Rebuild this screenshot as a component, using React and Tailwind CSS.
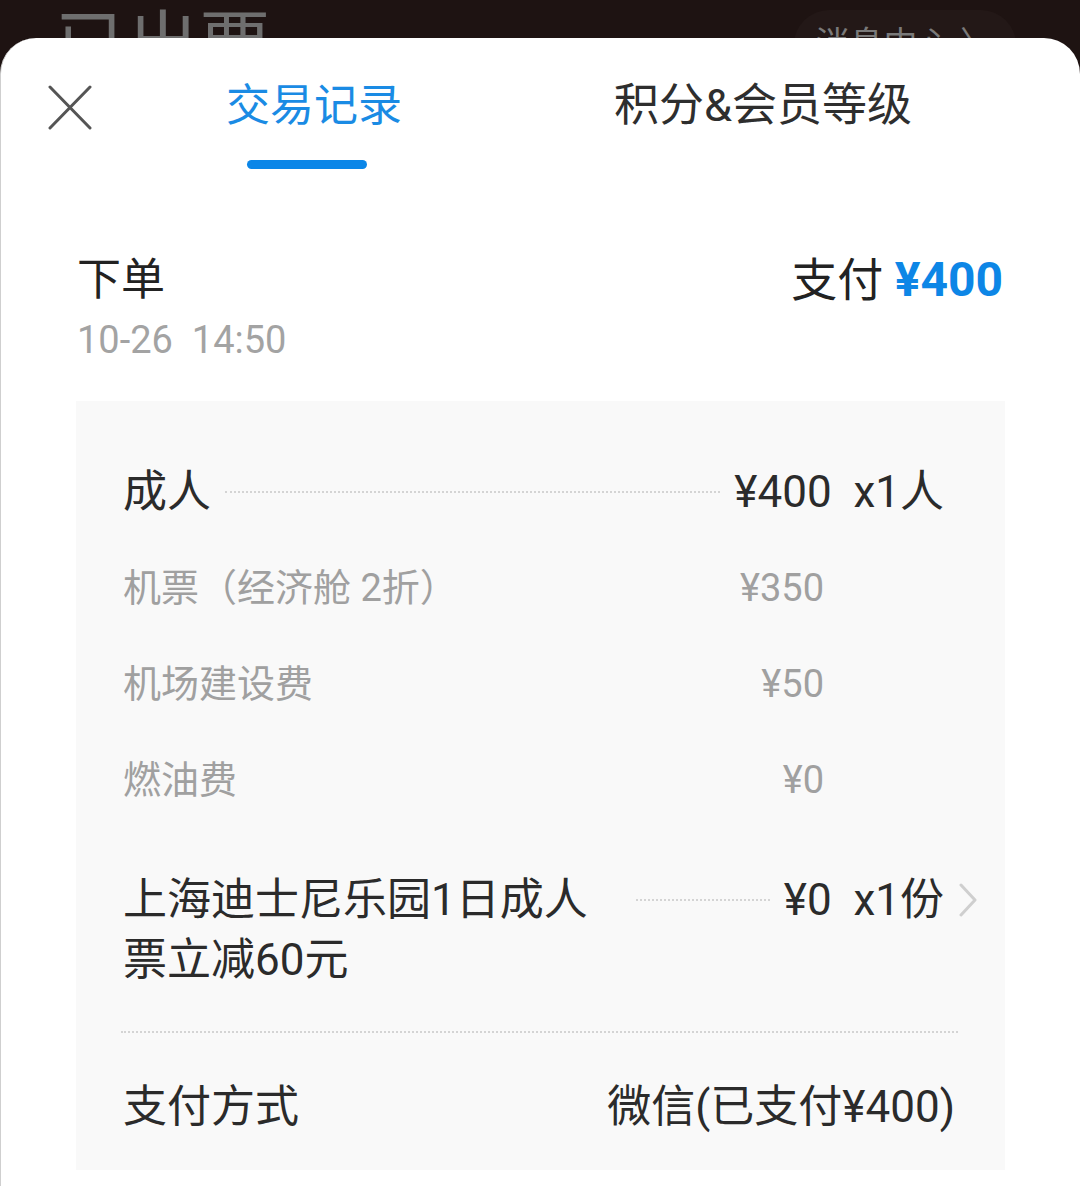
import React from "react";

// fee breakdown under the adult ticket
const SUB_ITEMS = [
  { label: "机票（经济舱 2折）", price: "¥350" },
  { label: "机场建设费", price: "¥50" },
  { label: "燃油费", price: "¥0" },
];

const FONT = { fontFamily: '"Roboto", "Noto Sans CJK SC", sans-serif' };

const CloseIcon = () => (
  <svg width="44" height="45" viewBox="0 0 44 45" fill="none">
    <path d="M2 2 L42 43 M42 2 L2 43" stroke="#555" strokeWidth="3" strokeLinecap="round" />
  </svg>
);

const Chevron = () => (
  <svg width="20" height="34" viewBox="0 0 20 34" fill="none">
    <path d="M3 2 L17 17 L3 32" stroke="#cfcfcf" strokeWidth="3" strokeLinecap="round" strokeLinejoin="round" />
  </svg>
);

const Dots = ({ className = "" }) => (
  <div className={`border-t-2 border-dotted border-[#d4d4d4] ${className}`}></div>
);

export default function App() {
  return (
    <div className="w-[1080px] h-[1186px] bg-[#1e1312] overflow-hidden flex flex-col" style={FONT}>
      {/* page behind the sheet */}
      <div className="h-[38px] shrink-0 overflow-hidden flex justify-between pl-[55px] pr-[64px]">
        <span className="text-[72px] leading-[72px] mt-[10px] text-[#6e6e6e]">已出票</span>
        <div className="mt-[10px] h-[70px] px-[22px] rounded-full bg-[#231817] flex items-start pt-[14px]">
          <span className="text-[34px] leading-[40px] text-[#7a7a7a]">消息中心 〉</span>
        </div>
      </div>

      {/* bottom sheet */}
      <div className="flex-1 bg-white rounded-t-[36px] border-l border-[#cfcfcf]">
        <div className="flex items-start pt-[38px] pl-[47px]">
          <div className="mt-[9px]">
            <CloseIcon />
          </div>
          <div className="ml-[134px] flex flex-col items-center">
            <span className="text-[44px] leading-[60px] text-[#1a8be4]">交易记录</span>
            <div className="mt-[24px] mr-[14px] w-[120px] h-[9px] rounded-full bg-[#0b86e8]"></div>
          </div>
          <span className="ml-[212px] text-[45px] leading-[60px] text-[#2e2e2e]">积分&amp;会员等级</span>
        </div>

        <div className="mt-[83px] pl-[76px] pr-[77px] flex justify-between items-start">
          <div>
            <div className="text-[44px] leading-[56px] text-[#222]">下单</div>
            <div className="mt-[10px] text-[38px] leading-[44px] text-[#a3a3a3] whitespace-pre">10-26  14:50</div>
          </div>
          <div className="text-[46px] leading-[56px] text-[#222]">
            支付 <span className="font-bold text-[48px] text-[#0d86e6]">¥400</span>
          </div>
        </div>

        <div className="mt-[39px] mx-[75px] bg-[#f9f9f9] pl-[47px] pr-[61px] pt-[43px] pb-[15px]">
          <div className="h-[96px] flex items-center text-[44px] text-[#2b2b2b]">
            <span>成人</span>
            <Dots className="flex-1 mx-[14px]" />
            <span className="whitespace-pre">¥400  x1人</span>
          </div>

          {SUB_ITEMS.map((item) => (
            <div key={item.label} className="h-[96px] flex items-center justify-between pr-[120px] text-[38px] text-[#a0a0a0]">
              <span>{item.label}</span>
              <span>{item.price}</span>
            </div>
          ))}

          <div className="mt-[42px] flex items-start text-[44px] leading-[60px] text-[#2b2b2b] mr-[-34px]">
            <span className="w-[499px] shrink-0">上海迪士尼乐园1日成人票立减60元</span>
            <Dots className="flex-1 mx-[14px] mt-[29px]" />
            <span className="whitespace-pre">¥0  x1份</span>
            <div className="ml-[14px] mt-[13px]">
              <Chevron />
            </div>
          </div>

          <Dots className="mt-[41px] ml-[-2px] mr-[-14px]" />

          <div className="mt-[26px] h-[96px] flex items-center justify-between mr-[-11px] text-[44px] text-[#2b2b2b]">
            <span>支付方式</span>
            <span>微信(已支付¥400)</span>
          </div>
        </div>
      </div>
    </div>
  );
}
